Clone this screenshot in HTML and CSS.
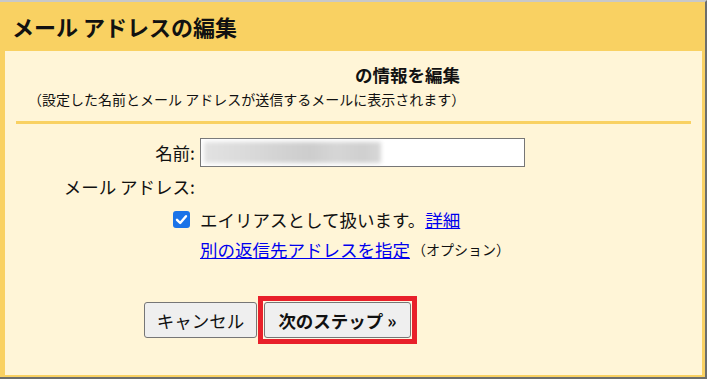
FILE: index.html
```html
<!DOCTYPE html>
<html lang="ja">
<head>
  <meta charset="UTF-8">
  <title>メール アドレスの編集</title>
  <link rel="stylesheet" href="styles.css">
</head>
<body>
  <div class="frame">
    <div class="dialog">
      <div class="dialog-title">メール アドレスの編集</div>
      <div class="dialog-body">
        <div class="subhead">の情報を編集</div>
        <div class="note">（設定した名前とメール アドレスが送信するメールに表示されます）</div>
        <div class="rule"></div>

        <div class="row row-name">
          <div class="label">名前:</div>
          <div class="value">
            <div class="text-field"><span class="blurred"></span></div>
          </div>
        </div>
        <div class="row row-mail">
          <div class="label">メール アドレス:</div>
          <div class="value"></div>
        </div>
        <div class="row row-alias">
          <div class="label">
            <span class="checkbox">
              <svg width="17" height="17" viewBox="0 0 17 17">
                <rect x="0" y="0" width="17" height="17" rx="3" fill="#1a73e8"/>
                <path d="M4 8.8 L7.2 12 L13 5.2" fill="none" stroke="#fff" stroke-width="2.4" stroke-linecap="round" stroke-linejoin="round"/>
              </svg>
            </span>
          </div>
          <div class="value">エイリアスとして扱います。<a href="#">詳細</a></div>
        </div>
        <div class="row row-reply">
          <div class="label"></div>
          <div class="value"><a href="#">別の返信先アドレスを指定</a><span class="small">（オプション）</span></div>
        </div>

        <div class="buttons">
          <button class="btn btn-cancel">キャンセル</button>
          <span class="highlight">
            <button class="btn btn-next">次のステップ »</button>
          </span>
        </div>
      </div>
    </div>
  </div>
</body>
</html>
```

FILE: styles.css
```css
body {
  margin: 0;
  padding: 0;
  background: #6c6e6c;
  font-family: "Noto Sans CJK JP", "Noto Sans", sans-serif;
  color: #111;
}

.frame {
  width: 705px;
  height: 375px;
  border-top: 2px solid #c8c8c8;
  border-right: 2px solid #6c6e6c;
  border-bottom: 2px solid #6c6e6c;
}

.dialog {
  height: 100%;
  background: #f9d162;
  padding: 0 3px 2px 5px;
  box-sizing: border-box;
  display: flex;
  flex-direction: column;
}

.dialog-title {
  height: 49px;
  line-height: 49px;
  margin-left: -5px;
  padding-left: 12px;
  font-size: 22px;
  font-weight: bold;
  color: #111;
}

.dialog-body {
  flex: 1;
  background: #fff5d7;
  padding-top: 12px;
}

.subhead {
  padding-left: 350px;
  font-size: 17.5px;
  font-weight: bold;
  line-height: 24px;
}

.note {
  margin-top: 2px;
  padding-left: 23px;
  font-size: 14px;
  line-height: 20px;
}

.rule {
  height: 3px;
  margin: 12px 11px 0 11px;
  background: #f9d162;
}

.row {
  display: flex;
  align-items: center;
  font-size: 17.5px;
}

.label {
  width: 190px;
  text-align: right;
  flex-shrink: 0;
}

.value {
  margin-left: 5px;
  display: flex;
  align-items: center;
}

.row-name {
  margin-top: 14px;
  height: 29px;
}

.row-mail {
  margin-top: 7px;
  height: 24px;
}

.row-alias {
  margin-top: 9px;
  height: 24px;
}

.row-reply {
  margin-top: 6px;
  height: 24px;
}

.row-alias .label {
  display: flex;
  justify-content: flex-end;
  padding-right: 10px;
  box-sizing: border-box;
  width: 195px;
}

.row-alias .value {
  margin-left: 0;
}

.checkbox {
  display: block;
  width: 17px;
  height: 17px;
}

.checkbox svg {
  display: block;
}

.text-field {
  width: 325px;
  height: 29px;
  box-sizing: border-box;
  border: 1px solid #767676;
  background: #fff;
  padding: 3px;
}

.blurred {
  display: block;
  width: 177px;
  height: 21px;
  background: linear-gradient(90deg, #e2e2e2 0%, #dadada 25%, #d2d2d2 45%, #cdcdcd 60%, #d6d6d6 75%, #cfcfcf 90%, #d8d8d8 100%);
  filter: blur(2px);
}

a {
  color: #0000ee;
  text-decoration: underline;
}

.small {
  font-size: 14px;
  margin-left: 2px;
}

.buttons {
  margin-top: 35px;
  padding-left: 139px;
  display: flex;
  align-items: center;
  gap: 1px;
}

.btn {
  height: 36px;
  border: 1px solid #767676;
  border-radius: 3px;
  background: #efefef;
  font-family: "Noto Sans CJK JP", "Noto Sans", sans-serif;
  font-size: 17.5px;
  color: #111;
  padding: 0;
  display: block;
}

.btn-cancel {
  width: 113px;
}

/* red frame around the next-step button */
.highlight {
  display: block;
  border: 5px solid #e8202a;
  padding: 1px;
  background: #fff8e4;
}

.btn-next {
  width: 147px;
  font-weight: bold;
}
```
